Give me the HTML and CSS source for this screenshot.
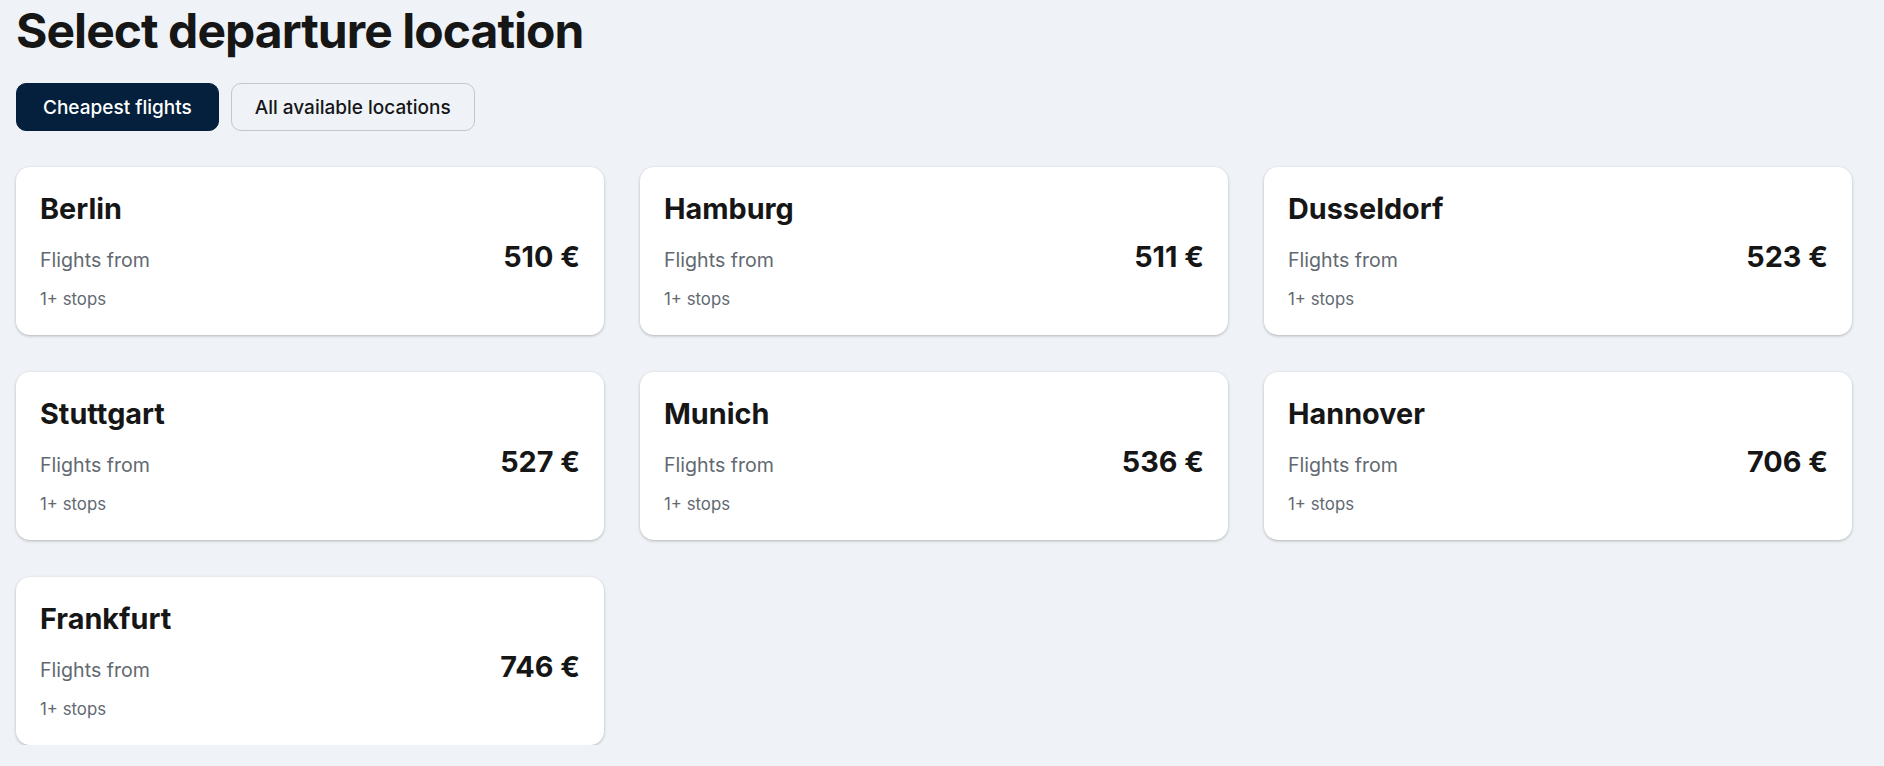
FILE: index.html
```html
<!DOCTYPE html>
<html lang="en">
<head>
  <meta charset="UTF-8">
  <meta name="viewport" content="width=device-width, initial-scale=1.0">
  <title>Select departure location</title>
  <link rel="stylesheet" href="styles.css">
</head>
<body>
  <div class="page">
    <h1 class="page-title">Select departure location</h1>

    <div class="tabs">
      <button class="tab active">Cheapest flights</button>
      <button class="tab">All available locations</button>
    </div>

    <div class="cards">
      <div class="card">
        <h3 class="city">Berlin</h3>
        <div class="price-row">
          <span class="label">Flights from</span>
          <span class="price">510 €</span>
        </div>
        <div class="stops">1+ stops</div>
      </div>
      <div class="card">
        <h3 class="city">Hamburg</h3>
        <div class="price-row">
          <span class="label">Flights from</span>
          <span class="price">511 €</span>
        </div>
        <div class="stops">1+ stops</div>
      </div>
      <div class="card">
        <h3 class="city">Dusseldorf</h3>
        <div class="price-row">
          <span class="label">Flights from</span>
          <span class="price">523 €</span>
        </div>
        <div class="stops">1+ stops</div>
      </div>
      <div class="card">
        <h3 class="city">Stuttgart</h3>
        <div class="price-row">
          <span class="label">Flights from</span>
          <span class="price">527 €</span>
        </div>
        <div class="stops">1+ stops</div>
      </div>
      <div class="card">
        <h3 class="city">Munich</h3>
        <div class="price-row">
          <span class="label">Flights from</span>
          <span class="price">536 €</span>
        </div>
        <div class="stops">1+ stops</div>
      </div>
      <div class="card">
        <h3 class="city">Hannover</h3>
        <div class="price-row">
          <span class="label">Flights from</span>
          <span class="price">706 €</span>
        </div>
        <div class="stops">1+ stops</div>
      </div>
      <div class="card">
        <h3 class="city">Frankfurt</h3>
        <div class="price-row">
          <span class="label">Flights from</span>
          <span class="price">746 €</span>
        </div>
        <div class="stops">1+ stops</div>
      </div>
    </div>
  </div>
</body>
</html>
```

FILE: styles.css
```css
/* General Reset */
body {
  margin: 0;
  background-color: #eff3f8;
  color: #161616;
  font-family: Inter, "Noto Sans", Arial, sans-serif;
}

/* Page wrapper */
.page {
  padding: 3px 32px 0 16px;
}

.page-title {
  margin: 0;
  font-size: 48px;
  line-height: 56px;
  font-weight: 700;
  letter-spacing: -0.02em;
}

/* Filter tabs */
.tabs {
  display: flex;
  gap: 12px;
  margin-top: 24px;
}

.tab {
  height: 48px;
  padding: 0 23px;
  border: 1px solid #c1c7cf;
  border-radius: 10px;
  background-color: transparent;
  color: #161616;
  font-family: inherit;
  font-size: 19px;
  font-weight: 500;
  cursor: pointer;
}

.tab.active {
  padding: 0 26px;
  background-color: #05203c;
  border-color: #05203c;
  color: #fff;
}

/* Location cards */
.cards {
  display: grid;
  grid-template-columns: repeat(3, 1fr);
  gap: 37px 36px;
  margin-top: 36px;
}

.card {
  padding: 24px;
  background-color: #fff;
  border-radius: 14px;
  box-shadow: 0 1px 3px 0 rgba(37, 32, 31, 0.3);
}

.city {
  margin: 0 0 12px;
  font-size: 28.8px;
  line-height: 36px;
  font-weight: 700;
}

.price-row {
  display: flex;
  justify-content: space-between;
  align-items: baseline;
}

.label {
  font-size: 19.6px;
  color: #626971;
}

.price {
  font-size: 28.8px;
  line-height: 36px;
  font-weight: 700;
}

.stops {
  margin-top: 12px;
  font-size: 16.8px;
  line-height: 24px;
  color: #626971;
}
```
